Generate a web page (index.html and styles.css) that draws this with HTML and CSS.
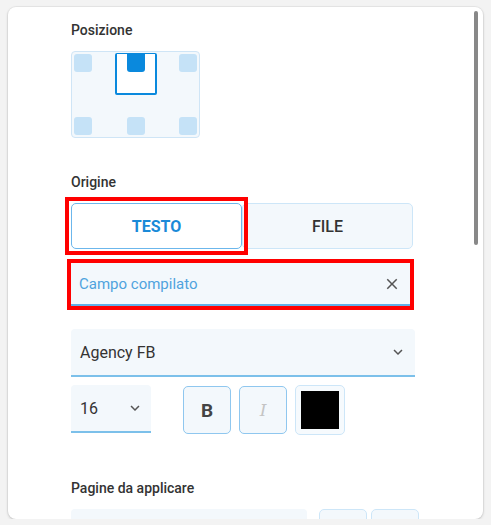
FILE: index.html
```html
<!DOCTYPE html>
<html lang="it">
<head>
<meta charset="UTF-8">
<meta name="viewport" content="width=device-width, initial-scale=1.0">
<title>Impostazioni timbro</title>
<link rel="stylesheet" href="styles.css">
</head>
<body>

<div class="panel">
  <div class="scroll-thumb"></div>

  <div class="label">Posizione</div>
  <div class="pos-grid">
    <span class="cell"></span>
    <span class="cell-selected"><span class="cell active"></span></span>
    <span class="cell"></span>
    <span class="cell"></span>
    <span class="cell"></span>
    <span class="cell"></span>
  </div>

  <div class="label origin-label">Origine</div>
  <div class="toggle">
    <button class="toggle-btn on">TESTO</button>
    <button class="toggle-btn">FILE</button>
  </div>

  <div class="field text-field">
    <span class="placeholder">Campo compilato</span>
    <svg class="icon" width="18" height="18" viewBox="0 0 24 24"><path d="M19 6.41 17.59 5 12 10.59 6.41 5 5 6.41 10.59 12 5 17.59 6.41 19 12 13.41 17.59 19 19 17.59 13.41 12z" fill="#555"/></svg>
  </div>

  <div class="field select-field">
    <span>Agency FB</span>
    <svg class="icon" width="18" height="18" viewBox="0 0 24 24"><path d="M16.59 8.59 12 13.17 7.41 8.59 6 10l6 6 6-6z" fill="#555"/></svg>
  </div>

  <div class="style-row">
    <div class="field size-field">
      <span>16</span>
      <svg class="icon" width="18" height="18" viewBox="0 0 24 24"><path d="M16.59 8.59 12 13.17 7.41 8.59 6 10l6 6 6-6z" fill="#555"/></svg>
    </div>
    <button class="style-btn bold">B</button>
    <button class="style-btn italic">I</button>
    <button class="color-btn"><span class="swatch"></span></button>
  </div>

  <div class="label pages-label">Pagine da applicare</div>
  <div class="pages-row">
    <div class="pages-field"></div>
    <button class="small-btn"></button>
    <button class="small-btn"></button>
  </div>
</div>

</body>
</html>
```

FILE: styles.css
```css
/* stamp settings panel */
body {
  margin: 0;
  background-color: #f3f3f3;
  font-family: Roboto, "Liberation Sans", sans-serif;
  color: #333;
}

.panel {
  position: relative;
  margin: 7px 8px 0 8px;
  height: 512px;
  box-sizing: border-box;
  padding: 15px 0 0 63px;
  background-color: #fff;
  border-radius: 8px;
  box-shadow: 0 1px 3px rgba(0, 0, 0, 0.18), 0 0 0 1px rgba(0, 0, 0, 0.04);
  overflow: hidden;
}

.scroll-thumb {
  position: absolute;
  top: 4px;
  right: 5px;
  width: 4px;
  height: 234px;
  border-radius: 2px;
  background-color: #888;
}

.label {
  font-size: 14px;
  font-weight: 500;
  line-height: 16px;
  color: #333;
}

.pos-grid {
  margin-top: 13px;
  width: 129px;
  height: 87px;
  box-sizing: border-box;
  padding: 2px;
  border: 1px solid #cfe5f6;
  border-radius: 4px;
  background-color: #f3f8fc;
  display: grid;
  grid-template-columns: 18px 42px 18px;
  grid-template-rows: auto auto;
  justify-content: space-between;
  align-content: space-between;
  align-items: start;
  justify-items: center;
}

.cell {
  display: block;
  width: 18px;
  height: 18px;
  border-radius: 3px;
  background-color: #c5e2f7;
}

.cell.active {
  background-color: #0a89dd;
  border-radius: 0 0 3px 3px;
}

.cell-selected {
  display: flex;
  justify-content: center;
  width: 42px;
  height: 42px;
  box-sizing: border-box;
  margin-top: -1px;
  border: 2px solid #0a89dd;
  border-top-width: 1px;
  border-radius: 2px;
  background-color: #fff;
}

.origin-label {
  margin-top: 36px;
}

.toggle {
  margin-top: 13px;
  width: 342px;
  display: flex;
}

.toggle-btn {
  flex: 1;
  height: 46px;
  font-family: Roboto, sans-serif;
  font-size: 16px;
  font-weight: 500;
  color: #333;
  background-color: #f3f8fc;
  border: 1px solid #cde6f8;
  border-radius: 5px;
}

.toggle-btn.on {
  position: relative;
  font-weight: 700;
  color: #1a8ad8;
  background-color: #fff;
  border-color: #6cb7ec;
  z-index: 1;
}

/* red highlight frame round the active tab */
.toggle-btn.on::after {
  content: "";
  position: absolute;
  top: -7px;
  left: -7px;
  right: -7px;
  bottom: -7px;
  border: 4px solid #ff0000;
}

.field {
  display: flex;
  align-items: center;
  justify-content: space-between;
  box-sizing: border-box;
  padding: 0 9px;
  background-color: #f3f8fc;
  border-radius: 4px 4px 0 0;
  border-bottom: 2px solid #7cc0ea;
}

.text-field {
  margin-top: 14px;
  width: 339px;
  height: 43px;
  padding-left: 8px;
  padding-right: 9px;
  font-size: 15px;
  border-bottom-color: #5fb0e8;
  border-radius: 0;
  outline: 4px solid #ff0000;
}

.placeholder {
  color: #4fa3de;
}

.icon {
  display: block;
}

.select-field {
  margin-top: 23px;
  width: 344px;
  height: 48px;
  font-size: 16px;
  padding-right: 8px;
}

.style-row {
  margin-top: 8px;
  display: flex;
  align-items: flex-start;
}

.size-field {
  width: 80px;
  height: 48px;
  font-size: 16px;
  padding-right: 7px;
}

.style-btn {
  width: 48px;
  height: 48px;
  margin-top: 1px;
  margin-left: 8px;
  padding: 0;
  background-color: #f3f8fc;
  border: 1px solid #8fc7ef;
  border-radius: 5px;
}

.style-btn.bold {
  margin-left: 32px;
  font-family: Roboto, sans-serif;
  font-size: 19px;
  font-weight: 700;
  color: #444;
}

.style-btn.italic {
  font-family: "DejaVu Serif", serif;
  font-style: italic;
  font-size: 17px;
  color: #c4c4c4;
}

.color-btn {
  width: 50px;
  height: 50px;
  margin-left: 8px;
  padding: 5px;
  background-color: #f6fafd;
  border: 1px solid #cde6f8;
  border-radius: 5px;
}

.swatch {
  display: block;
  width: 38px;
  height: 38px;
  background-color: #000;
}

.pages-label {
  margin-top: 45px;
}

.pages-row {
  margin-top: 13px;
  display: flex;
}

.pages-field {
  width: 236px;
  height: 48px;
  border-radius: 4px 4px 0 0;
  background-color: #f3f8fc;
}

.small-btn {
  width: 48px;
  height: 48px;
  margin-left: 4px;
  background-color: #f3f8fc;
  border: 1px solid #cde6f8;
  border-radius: 5px;
}

.pages-field + .small-btn {
  margin-left: 12px;
}
```
